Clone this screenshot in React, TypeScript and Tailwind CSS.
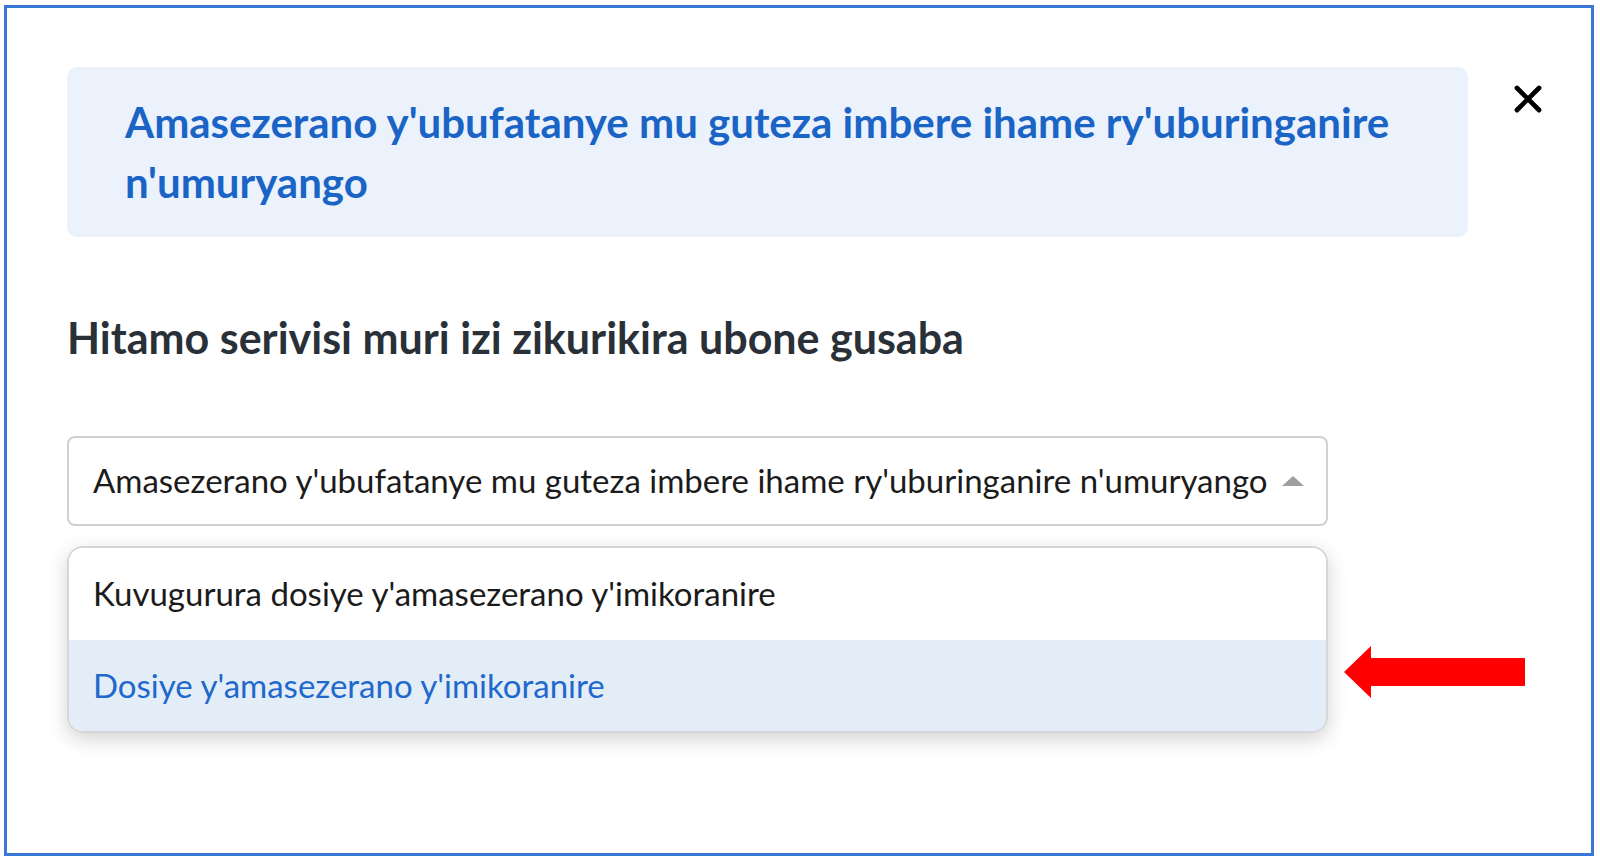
import { X } from 'lucide-react'

const font = { fontFamily: 'Lato, "Noto Sans", sans-serif' }

export default function App() {
  return (
    <div className="w-[1600px] h-[865px] bg-white pl-[4px] pt-[5px]" style={font}>
      <div className="w-[1590px] h-[851px] border-[3px] border-[#3a78d8] pl-[60px] pr-[41px] pt-[59px]">
        <div className="flex items-start gap-[38px]">
          <div className="flex-1 bg-[#ebf2fb] rounded-[10px] pl-[58px] pr-[30px] py-[25px]">
            <h1 className="text-[42px] leading-[60px] font-bold text-[#1a64c6]">
              Amasezerano y'ubufatanye mu guteza imbere ihame ry'uburinganire n'umuryango
            </h1>
          </div>
          <button className="mt-[10px] text-black">
            <X size={44} strokeWidth={2.6} />
          </button>
        </div>

        <h2 className="mt-[76px] text-[43px] leading-[50px] font-bold text-[#2a3038]">
          Hitamo serivisi muri izi zikurikira ubone gusaba
        </h2>

        <div className="mt-[73px] w-[1261px] h-[90px] border-[2px] border-[#d0d0d0] rounded-[8px] flex items-center justify-between pl-[24px] pr-[22px]">
          <span className="text-[33px] text-[#1b1b1b]">
            Amasezerano y'ubufatanye mu guteza imbere ihame ry'uburinganire n'umuryango
          </span>
          <svg width="22" height="10" viewBox="0 0 22 10">
            <polygon points="0,10 11,0 22,10" fill="#9e9e9e" />
          </svg>
        </div>

        <div className="flex items-start gap-[16px] mt-[20px]">
          <div className="w-[1261px] border-[2px] border-[#d6d6d6] rounded-[16px] overflow-hidden shadow-[0_6px_20px_rgba(0,0,0,0.18)]">
            <div className="h-[92px] flex items-center pl-[24px] text-[33px] text-[#1b1b1b] bg-white">
              Kuvugurura dosiye y'amasezerano y'imikoranire
            </div>
            <div className="h-[91px] flex items-center pl-[24px] text-[33px] text-[#1f68cc] bg-[#e3edf8]">
              Dosiye y'amasezerano y'imikoranire
            </div>
          </div>
          <svg className="mt-[100px]" width="181" height="52" viewBox="0 0 181 52">
            <polygon points="0,26 27,0 27,12 181,12 181,40 27,40 27,52" fill="#ff0000" />
          </svg>
        </div>
      </div>
    </div>
  )
}
